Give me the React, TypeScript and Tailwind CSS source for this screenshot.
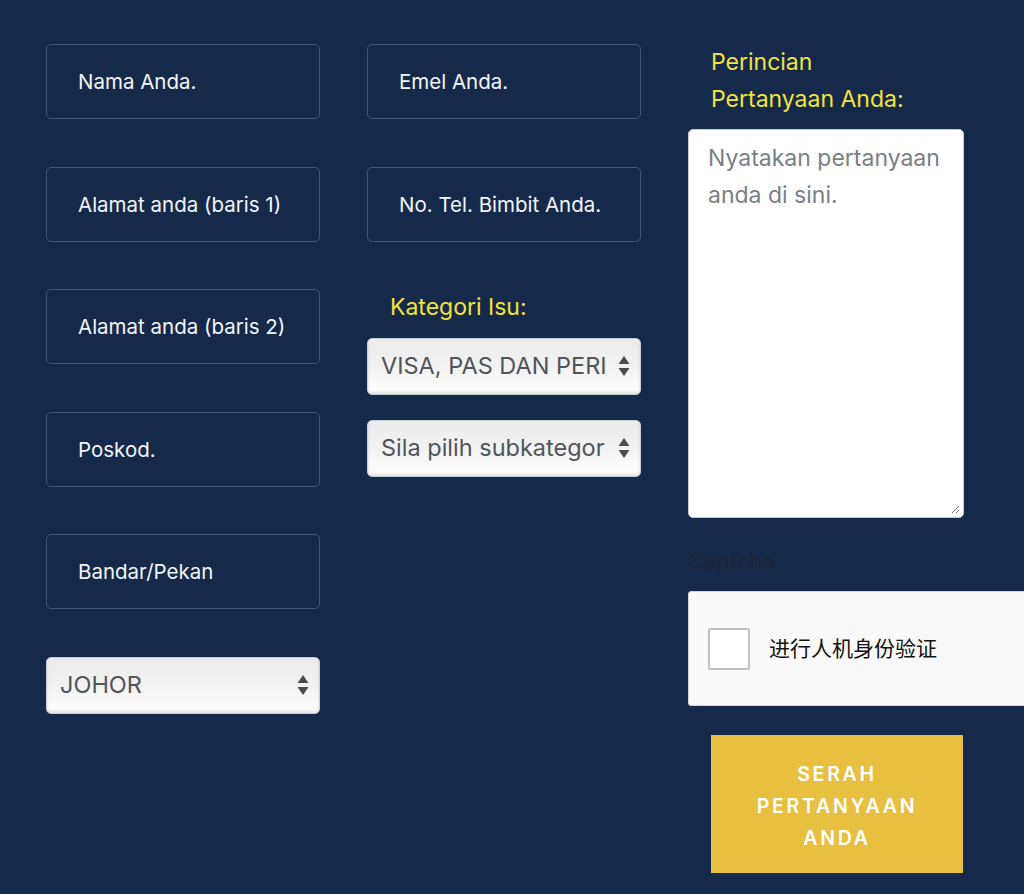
const font = { fontFamily: 'Inter, "Noto Sans", "Noto Sans CJK SC", sans-serif' };

function Field({ label }: { label: string }) {
  return (
    <div className="h-[75px] w-[274px] rounded-[5px] border border-[#40557a] flex items-center pl-[31px] pt-[2px] text-[20.5px] text-[#f3f4f6]">
      {label}
    </div>
  );
}

function Select({ value }: { value: string }) {
  return (
    <div className="relative h-[57px] w-[274px] rounded-[5px] border border-[#c9ccd1] bg-gradient-to-b from-[#ececec] via-[#f2f2f2] to-[#ffffff] shadow-[inset_0_-2px_3px_rgba(0,0,0,0.12)] flex items-center pl-[13px] pr-[34px] overflow-hidden">
      <span className="text-[23.5px] text-[#50545b] whitespace-nowrap overflow-hidden">{value}</span>
      <svg className="absolute right-[10px] top-1/2 -translate-y-1/2" width="12" height="22" viewBox="0 0 12 22">
        <path d="M6 1 L11.5 9 L0.5 9 Z" fill="#4a4d52" />
        <path d="M6 21 L11.5 13 L0.5 13 Z" fill="#4a4d52" />
      </svg>
    </div>
  );
}

export default function App() {
  return (
    <div className="min-h-[894px] w-[1024px] overflow-hidden bg-[#152a4b] pt-[44px] pl-[46px]" style={font}>
      <div className="flex gap-[47px] items-start">
        <div className="flex flex-col gap-[47.5px]">
          <Field label="Nama Anda." />
          <Field label="Alamat anda (baris 1)" />
          <Field label="Alamat anda (baris 2)" />
          <Field label="Poskod." />
          <Field label="Bandar/Pekan" />
          <Select value="JOHOR" />
        </div>

        <div className="flex flex-col">
          <Field label="Emel Anda." />
          <div className="mt-[47.5px]">
            <Field label="No. Tel. Bimbit Anda." />
          </div>
          <div className="mt-[49px] pl-[23px] text-[23px] leading-[32px] text-[#f4e23f]">Kategori Isu:</div>
          <div className="mt-[15px] flex flex-col gap-[25px]">
            <Select value="VISA, PAS DAN PERI" />
            <Select value="Sila pilih subkategor" />
          </div>
        </div>

        <div className="flex flex-col">
          <div className="pl-[23px] text-[23px] leading-[37px] text-[#f4e23f]">
            Perincian
            <br />
            Pertanyaan Anda:
          </div>
          <div className="relative mt-[11px] h-[389px] w-[276px] rounded-[5px] border border-[#c7cbd1] bg-white pl-[19px] pt-[10px] text-[23px] leading-[37px] text-[#7a7f86]">
            Nyatakan pertanyaan anda di sini.
            <svg className="absolute right-[3px] bottom-[3px]" width="10" height="10" viewBox="0 0 10 10">
              <path d="M9 2 L2 9 M9 6 L6 9" stroke="#777" strokeWidth="1" />
            </svg>
          </div>
          <div className="mt-[29px] text-[22px] leading-[28px] text-[#1c2431]">Captcha</div>
          <div className="mt-[16px] h-[115px] w-[340px] rounded-l-[3px] border border-[#d6d6d6] bg-[#f9f9f9] flex items-center pl-[19px]">
            <div className="h-[42px] w-[42px] rounded-[2px] border-2 border-[#c1c1c1] bg-white" />
            <span className="ml-[19px] text-[21px] text-[#111]">进行人机身份验证</span>
          </div>
          <div className="mt-[29px] ml-[23px] h-[138px] w-[252px] bg-[#e9bf3f] flex items-center justify-center pt-[4px] text-center text-[19.5px] leading-[32px] font-semibold tracking-[0.14em] text-white">
            SERAH
            <br />
            PERTANYAAN
            <br />
            ANDA
          </div>
        </div>
      </div>
    </div>
  );
}
